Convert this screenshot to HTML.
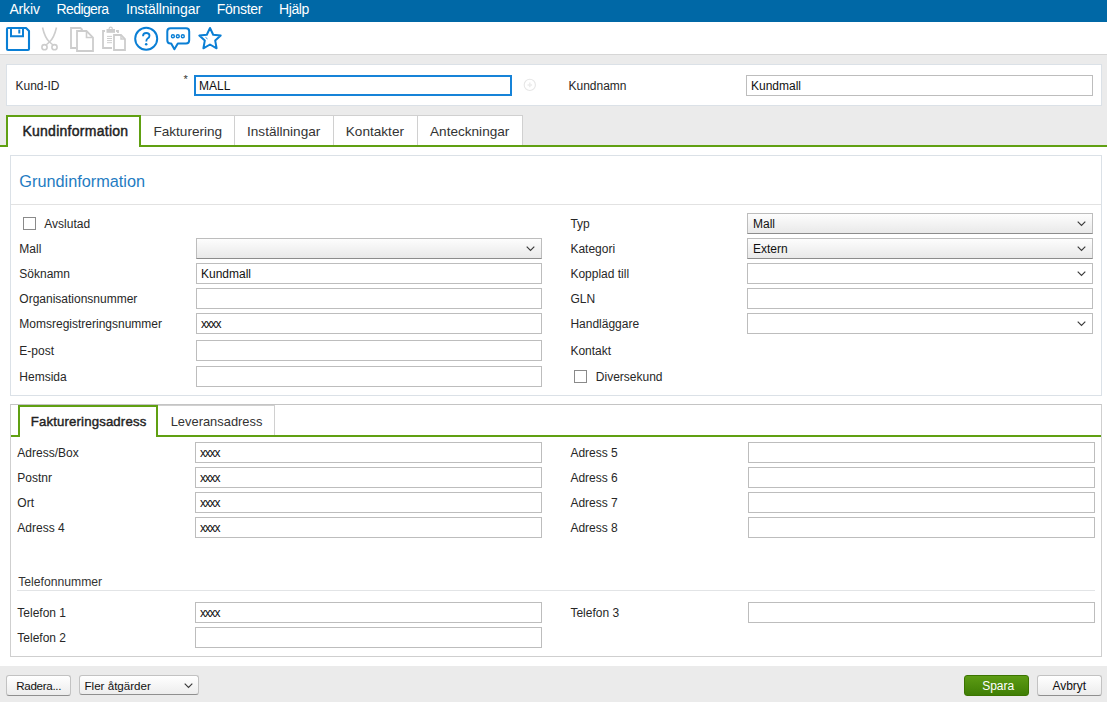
<!DOCTYPE html>
<html><head><meta charset="utf-8"><style>
html,body{margin:0;padding:0;}
body{width:1107px;height:702px;position:relative;overflow:hidden;background:#fff;font-family:"Liberation Sans", sans-serif;}
.t{position:absolute;white-space:nowrap;}
.b{position:absolute;}
svg.b{overflow:visible;}
svg{display:block;}
</style></head><body>
<div class="b" style="left:0px;top:0px;width:1107px;height:22px;background:#0068a6;"></div>
<div class="t" style="left:9.4px;top:2px;font-size:14px;line-height:14px;color:#fff;font-weight:normal;letter-spacing:-0.15px;">Arkiv</div>
<div class="t" style="left:56.5px;top:2px;font-size:14px;line-height:14px;color:#fff;font-weight:normal;letter-spacing:-0.6px;">Redigera</div>
<div class="t" style="left:125.9px;top:2px;font-size:14px;line-height:14px;color:#fff;font-weight:normal;letter-spacing:-0.11px;">Inställningar</div>
<div class="t" style="left:216.8px;top:2px;font-size:14px;line-height:14px;color:#fff;font-weight:normal;letter-spacing:-0.3px;">Fönster</div>
<div class="t" style="left:279px;top:2px;font-size:14px;line-height:14px;color:#fff;font-weight:normal;letter-spacing:-0.4px;">Hjälp</div>
<div class="b" style="left:0px;top:22px;width:1107px;height:32px;background:#fff;"></div>
<div class="b" style="left:0px;top:54px;width:1107px;height:1px;background:#d6d6d6;"></div>

<svg class="b" style="left:0;top:22px" width="240" height="32" viewBox="0 22 240 32">
 <!-- save -->
 <path d="M7 29 Q7 28 8 28 L26 28 L29 31 L29 49 Q29 50 28 50 L8 50 Q7 50 7 49 Z" fill="none" stroke="#0a7fd5" stroke-width="2.1" stroke-linejoin="round"/>
 <path d="M11 28 L11 36.2 L23 36.2 L23 28" fill="none" stroke="#0a7fd5" stroke-width="2"/>
 <rect x="18.3" y="29.5" width="2" height="4" fill="#0a7fd5"/>
 <!-- scissors -->
 <path d="M42.5 27.5 Q45 38 49.5 42 M56.5 27.5 Q54 38 49.5 42" fill="none" stroke="#cdcdcd" stroke-width="1.6"/>
 <ellipse cx="44.5" cy="47.2" rx="2.6" ry="2.6" fill="none" stroke="#cdcdcd" stroke-width="1.6"/>
 <ellipse cx="54.5" cy="47.2" rx="2.6" ry="2.6" fill="none" stroke="#cdcdcd" stroke-width="1.6"/>
 <path d="M46 45 L49.5 42 L53 45" fill="none" stroke="#cdcdcd" stroke-width="1.5"/>
 <!-- copy -->
 <path d="M76 48 L71 48 L71 28 L80.5 28 L82.5 30" fill="none" stroke="#cdcdcd" stroke-width="1.8"/>
 <path d="M77 31 L86.5 31 L93 37.5 L93 51 L77 51 Z" fill="none" stroke="#cdcdcd" stroke-width="1.8"/>
 <path d="M86.5 31 L86.5 37.5 L93 37.5" fill="none" stroke="#cdcdcd" stroke-width="1.6"/>
 <!-- paste -->
 <path d="M105 31 L103 31 L103 48 L112 48" fill="none" stroke="#cdcdcd" stroke-width="1.8"/>
 <path d="M116 31 L118 31 L118 33" fill="none" stroke="#cdcdcd" stroke-width="1.8"/>
 <rect x="106.5" y="29" width="8.5" height="3.8" fill="#cdcdcd"/>
 <circle cx="110.7" cy="28.8" r="1.6" fill="none" stroke="#cdcdcd" stroke-width="1.2"/>
 <path d="M107 36.4 H112 M107 38.5 H112 M107 40.6 H112 M107 42.7 H112" stroke="#cdcdcd" stroke-width="1"/>
 <path d="M114 35 L121 35 L125 39 L125 50 L114 50 Z" fill="none" stroke="#cdcdcd" stroke-width="1.8"/>
 <path d="M121 35 L121 39 L125 39" fill="none" stroke="#cdcdcd" stroke-width="1.4"/>
 <!-- help -->
 <circle cx="146.2" cy="38.7" r="11" fill="none" stroke="#0a7fd5" stroke-width="2"/>
 <path d="M143 36.2 Q143 33 146.3 33 Q149.5 33 149.5 35.8 Q149.5 37.6 147.6 38.5 Q146.3 39.2 146.3 41.4" fill="none" stroke="#0a7fd5" stroke-width="1.8"/>
 <circle cx="146.2" cy="44.2" r="1.25" fill="#0a7fd5"/>
 <!-- comment -->
 <path d="M170.5 28.2 L186 28.2 Q189.2 28.2 189.2 31.4 L189.2 40.2 Q189.2 43.4 186 43.4 L177.8 43.4 L174.4 49.2 L171.2 43.4 L170.5 43.4 Q167.3 43.4 167.3 40.2 L167.3 31.4 Q167.3 28.2 170.5 28.2 Z" fill="none" stroke="#0a7fd5" stroke-width="2" stroke-linejoin="round"/>
 <circle cx="172.9" cy="36.2" r="1.5" fill="none" stroke="#0a7fd5" stroke-width="1.35"/>
 <circle cx="177.8" cy="36.2" r="1.5" fill="none" stroke="#0a7fd5" stroke-width="1.35"/>
 <circle cx="182.8" cy="36.2" r="1.5" fill="none" stroke="#0a7fd5" stroke-width="1.35"/>
 <!-- star -->
 <path d="M210 28 L213.2 34.8 L220.7 35.6 L215.2 40.6 L216.6 48.3 L210 44.5 L203.4 48.3 L204.8 40.6 L199.3 35.6 L206.8 34.8 Z" fill="none" stroke="#0a7fd5" stroke-width="2" stroke-linejoin="round"/>
 <path d="M205.5 37.3 L207.5 38.9" stroke="#0a7fd5" stroke-width="0.9"/>
</svg>
<div class="b" style="left:0px;top:55px;width:1107px;height:92px;background:#ebebeb;"></div>
<div class="b" style="left:6px;top:64px;width:1096px;height:42px;background:#fff;border:1px solid #dbe1e7;box-sizing:border-box;"></div>
<div class="t" style="left:15.5px;top:80px;font-size:12px;line-height:12px;color:#272727;font-weight:normal;">Kund-ID</div>
<div class="t" style="left:183.5px;top:74px;font-size:11px;line-height:11px;color:#333;font-weight:normal;">*</div>
<div class="b" style="left:194px;top:75px;width:318px;height:21px;border:2px solid #1683d8;background:#fff;box-sizing:border-box;"></div>
<div class="t" style="left:199px;top:80px;font-size:12px;line-height:12px;color:#111;font-weight:normal;">MALL</div>
<svg class="b" style="left:522px;top:78px" width="16" height="16" viewBox="0 0 16 16"><circle cx="7.8" cy="6.9" r="5.6" fill="none" stroke="#e6e6e6" stroke-width="1.1"/><path d="M7.8 4.6V9.2M5.5 6.9H10.1" stroke="#ececec" stroke-width="1.5"/></svg>
<div class="t" style="left:568.5px;top:80px;font-size:12px;line-height:12px;color:#272727;font-weight:normal;">Kundnamn</div>
<div class="b" style="left:746px;top:75px;width:347px;height:21px;border:1px solid #bdbdbd;background:#fff;box-sizing:border-box;"></div>
<div class="t" style="left:751px;top:80px;font-size:12px;line-height:12px;color:#111;font-weight:normal;">Kundmall</div>
<div class="b" style="left:0px;top:145px;width:1107px;height:2px;background:#60a012;"></div>
<div class="b" style="left:140px;top:115px;width:95px;height:30px;background:#fff;border:1px solid #d0d0d0;border-bottom:none;box-sizing:border-box;"></div>
<div class="b" style="left:234px;top:115px;width:100px;height:30px;background:#fff;border:1px solid #d0d0d0;border-bottom:none;box-sizing:border-box;"></div>
<div class="b" style="left:333px;top:115px;width:85px;height:30px;background:#fff;border:1px solid #d0d0d0;border-bottom:none;box-sizing:border-box;"></div>
<div class="b" style="left:417px;top:115px;width:106px;height:30px;background:#fff;border:1px solid #d0d0d0;border-bottom:none;box-sizing:border-box;"></div>
<div class="t" style="left:153.4px;top:125px;font-size:13.6px;line-height:13.6px;color:#333;font-weight:normal;">Fakturering</div>
<div class="t" style="left:247px;top:125px;font-size:13.6px;line-height:13.6px;color:#333;font-weight:normal;">Inställningar</div>
<div class="t" style="left:345.8px;top:125px;font-size:13.6px;line-height:13.6px;color:#333;font-weight:normal;">Kontakter</div>
<div class="t" style="left:430px;top:125px;font-size:13.6px;line-height:13.6px;color:#333;font-weight:normal;">Anteckningar</div>
<div class="b" style="left:6px;top:115px;width:135px;height:32px;background:#fff;border:2px solid #60a012;border-bottom:none;box-sizing:border-box;"></div>
<div class="t" style="left:22.4px;top:124px;font-size:14px;line-height:14px;color:#222;font-weight:normal;-webkit-text-stroke:0.45px #222;letter-spacing:0.27px;">Kundinformation</div>
<div class="b" style="left:0px;top:147px;width:1107px;height:519px;background:#fff;"></div>
<div class="b" style="left:10px;top:155px;width:1092px;height:241px;border:1px solid #dbe1e7;box-sizing:border-box;"></div>
<div class="b" style="left:11px;top:204px;width:1090px;height:1px;background:#e2e2e2;"></div>
<div class="t" style="left:19.3px;top:173px;font-size:16.3px;line-height:16.3px;color:#1f7cc2;font-weight:normal;">Grundinformation</div>
<div class="b" style="left:23px;top:217px;width:13px;height:13px;border:1px solid #8a8a8a;background:#fff;box-sizing:border-box;"></div>
<div class="t" style="left:44.3px;top:218px;font-size:12px;line-height:12px;color:#272727;font-weight:normal;">Avslutad</div>
<div class="t" style="left:19.3px;top:243px;font-size:12px;line-height:12px;color:#272727;font-weight:normal;">Mall</div>
<div class="t" style="left:19.3px;top:268px;font-size:12px;line-height:12px;color:#272727;font-weight:normal;">Söknamn</div>
<div class="t" style="left:19.3px;top:293px;font-size:12px;line-height:12px;color:#272727;font-weight:normal;">Organisationsnummer</div>
<div class="t" style="left:19.3px;top:318px;font-size:12px;line-height:12px;color:#272727;font-weight:normal;">Momsregistreringsnummer</div>
<div class="t" style="left:19.3px;top:345px;font-size:12px;line-height:12px;color:#272727;font-weight:normal;">E-post</div>
<div class="t" style="left:19.3px;top:371px;font-size:12px;line-height:12px;color:#272727;font-weight:normal;">Hemsida</div>
<div class="b" style="left:196px;top:238px;width:346px;height:21px;border:1px solid #bdbdbd;border-bottom-color:#8c8c8c;background:linear-gradient(#fdfdfd,#e9e9e9);box-sizing:border-box;"></div>
<div class="b" style="left:525.5px;top:245.5px;width:9px;height:6px;"><svg width="9" height="6" viewBox="0 0 9 6"><path d="M0.7 0.7 L4.5 4.5 L8.3 0.7" fill="none" stroke="#3a3a3a" stroke-width="1.15"/></svg></div>
<div class="b" style="left:196px;top:263px;width:346px;height:21px;border:1px solid #bdbdbd;background:#fff;box-sizing:border-box;"></div>
<div class="t" style="left:201px;top:268px;font-size:12px;line-height:12px;color:#111;font-weight:normal;">Kundmall</div>
<div class="b" style="left:196px;top:288px;width:346px;height:21px;border:1px solid #bdbdbd;background:#fff;box-sizing:border-box;"></div>
<div class="b" style="left:196px;top:313px;width:346px;height:21px;border:1px solid #bdbdbd;background:#fff;box-sizing:border-box;"></div>
<div class="t" style="left:201px;top:318px;font-size:12px;line-height:12px;color:#111;font-weight:normal;letter-spacing:-1.2px;">xxxx</div>
<div class="b" style="left:196px;top:340px;width:346px;height:21px;border:1px solid #bdbdbd;background:#fff;box-sizing:border-box;"></div>
<div class="b" style="left:196px;top:366px;width:346px;height:21px;border:1px solid #bdbdbd;background:#fff;box-sizing:border-box;"></div>
<div class="t" style="left:570.4px;top:218px;font-size:12px;line-height:12px;color:#272727;font-weight:normal;">Typ</div>
<div class="t" style="left:570.4px;top:243px;font-size:12px;line-height:12px;color:#272727;font-weight:normal;">Kategori</div>
<div class="t" style="left:570.4px;top:268px;font-size:12px;line-height:12px;color:#272727;font-weight:normal;">Kopplad till</div>
<div class="t" style="left:570.4px;top:293px;font-size:12px;line-height:12px;color:#272727;font-weight:normal;">GLN</div>
<div class="t" style="left:570.4px;top:318px;font-size:12px;line-height:12px;color:#272727;font-weight:normal;">Handläggare</div>
<div class="t" style="left:570.4px;top:345px;font-size:12px;line-height:12px;color:#272727;font-weight:normal;">Kontakt</div>
<div class="b" style="left:747px;top:213px;width:346px;height:21px;border:1px solid #bdbdbd;border-bottom-color:#8c8c8c;background:linear-gradient(#fdfdfd,#e9e9e9);box-sizing:border-box;"></div>
<div class="t" style="left:753px;top:218px;font-size:12px;line-height:12px;color:#111;font-weight:normal;">Mall</div>
<div class="b" style="left:1076.5px;top:220.5px;width:9px;height:6px;"><svg width="9" height="6" viewBox="0 0 9 6"><path d="M0.7 0.7 L4.5 4.5 L8.3 0.7" fill="none" stroke="#3a3a3a" stroke-width="1.15"/></svg></div>
<div class="b" style="left:747px;top:238px;width:346px;height:21px;border:1px solid #bdbdbd;border-bottom-color:#8c8c8c;background:linear-gradient(#fdfdfd,#e9e9e9);box-sizing:border-box;"></div>
<div class="t" style="left:753px;top:243px;font-size:12px;line-height:12px;color:#111;font-weight:normal;">Extern</div>
<div class="b" style="left:1076.5px;top:245.5px;width:9px;height:6px;"><svg width="9" height="6" viewBox="0 0 9 6"><path d="M0.7 0.7 L4.5 4.5 L8.3 0.7" fill="none" stroke="#3a3a3a" stroke-width="1.15"/></svg></div>
<div class="b" style="left:747px;top:263px;width:346px;height:21px;border:1px solid #bdbdbd;border-bottom-color:#bdbdbd;background:#fff;box-sizing:border-box;"></div>
<div class="b" style="left:1076.5px;top:270.5px;width:9px;height:6px;"><svg width="9" height="6" viewBox="0 0 9 6"><path d="M0.7 0.7 L4.5 4.5 L8.3 0.7" fill="none" stroke="#3a3a3a" stroke-width="1.15"/></svg></div>
<div class="b" style="left:747px;top:288px;width:346px;height:21px;border:1px solid #bdbdbd;background:#fff;box-sizing:border-box;"></div>
<div class="b" style="left:747px;top:313px;width:346px;height:21px;border:1px solid #bdbdbd;border-bottom-color:#bdbdbd;background:#fff;box-sizing:border-box;"></div>
<div class="b" style="left:1076.5px;top:320.5px;width:9px;height:6px;"><svg width="9" height="6" viewBox="0 0 9 6"><path d="M0.7 0.7 L4.5 4.5 L8.3 0.7" fill="none" stroke="#3a3a3a" stroke-width="1.15"/></svg></div>
<div class="b" style="left:574px;top:370px;width:13px;height:13px;border:1px solid #8a8a8a;background:#fff;box-sizing:border-box;"></div>
<div class="t" style="left:595.8px;top:371px;font-size:12px;line-height:12px;color:#272727;font-weight:normal;">Diversekund</div>
<div class="b" style="left:10px;top:404px;width:1092px;height:253px;border:1px solid #cfcfcf;border-top-color:#c4c4c4;box-sizing:border-box;"></div>
<div class="b" style="left:11px;top:435px;width:1090px;height:2px;background:#60a012;"></div>
<div class="b" style="left:157px;top:405px;width:118px;height:30px;background:#fff;border:1px solid #d0d0d0;border-bottom:none;box-sizing:border-box;"></div>
<div class="t" style="left:170.7px;top:416px;font-size:12.9px;line-height:12.9px;color:#333;font-weight:normal;">Leveransadress</div>
<div class="b" style="left:18px;top:405px;width:140px;height:32px;background:#fff;border:2px solid #60a012;border-bottom:none;box-sizing:border-box;"></div>
<div class="t" style="left:30.8px;top:415px;font-size:13.2px;line-height:13.2px;color:#222;font-weight:normal;-webkit-text-stroke:0.4px #222;letter-spacing:0.15px;">Faktureringsadress</div>
<div class="t" style="left:17.3px;top:447px;font-size:12px;line-height:12px;color:#272727;font-weight:normal;">Adress/Box</div>
<div class="b" style="left:195px;top:442px;width:347px;height:21px;border:1px solid #bdbdbd;background:#fff;box-sizing:border-box;"></div>
<div class="t" style="left:200px;top:447px;font-size:12px;line-height:12px;color:#111;font-weight:normal;letter-spacing:-1.2px;">xxxx</div>
<div class="t" style="left:17.3px;top:472px;font-size:12px;line-height:12px;color:#272727;font-weight:normal;">Postnr</div>
<div class="b" style="left:195px;top:467px;width:347px;height:21px;border:1px solid #bdbdbd;background:#fff;box-sizing:border-box;"></div>
<div class="t" style="left:200px;top:472px;font-size:12px;line-height:12px;color:#111;font-weight:normal;letter-spacing:-1.2px;">xxxx</div>
<div class="t" style="left:17.3px;top:497px;font-size:12px;line-height:12px;color:#272727;font-weight:normal;">Ort</div>
<div class="b" style="left:195px;top:492px;width:347px;height:21px;border:1px solid #bdbdbd;background:#fff;box-sizing:border-box;"></div>
<div class="t" style="left:200px;top:497px;font-size:12px;line-height:12px;color:#111;font-weight:normal;letter-spacing:-1.2px;">xxxx</div>
<div class="t" style="left:17.3px;top:522px;font-size:12px;line-height:12px;color:#272727;font-weight:normal;">Adress 4</div>
<div class="b" style="left:195px;top:517px;width:347px;height:21px;border:1px solid #bdbdbd;background:#fff;box-sizing:border-box;"></div>
<div class="t" style="left:200px;top:522px;font-size:12px;line-height:12px;color:#111;font-weight:normal;letter-spacing:-1.2px;">xxxx</div>
<div class="t" style="left:570.4px;top:447px;font-size:12px;line-height:12px;color:#272727;font-weight:normal;">Adress 5</div>
<div class="b" style="left:748px;top:442px;width:347px;height:21px;border:1px solid #bdbdbd;background:#fff;box-sizing:border-box;"></div>
<div class="t" style="left:570.4px;top:472px;font-size:12px;line-height:12px;color:#272727;font-weight:normal;">Adress 6</div>
<div class="b" style="left:748px;top:467px;width:347px;height:21px;border:1px solid #bdbdbd;background:#fff;box-sizing:border-box;"></div>
<div class="t" style="left:570.4px;top:497px;font-size:12px;line-height:12px;color:#272727;font-weight:normal;">Adress 7</div>
<div class="b" style="left:748px;top:492px;width:347px;height:21px;border:1px solid #bdbdbd;background:#fff;box-sizing:border-box;"></div>
<div class="t" style="left:570.4px;top:522px;font-size:12px;line-height:12px;color:#272727;font-weight:normal;">Adress 8</div>
<div class="b" style="left:748px;top:517px;width:347px;height:21px;border:1px solid #bdbdbd;background:#fff;box-sizing:border-box;"></div>
<div class="t" style="left:18.2px;top:576px;font-size:12.2px;line-height:12.2px;color:#333;font-weight:normal;">Telefonnummer</div>
<div class="b" style="left:17px;top:590px;width:1078px;height:1px;background:#e2e4e6;"></div>
<div class="t" style="left:17.3px;top:607px;font-size:12px;line-height:12px;color:#272727;font-weight:normal;">Telefon 1</div>
<div class="t" style="left:17.3px;top:632px;font-size:12px;line-height:12px;color:#272727;font-weight:normal;">Telefon 2</div>
<div class="b" style="left:195px;top:602px;width:347px;height:21px;border:1px solid #bdbdbd;background:#fff;box-sizing:border-box;"></div>
<div class="t" style="left:200px;top:607px;font-size:12px;line-height:12px;color:#111;font-weight:normal;letter-spacing:-1.2px;">xxxx</div>
<div class="b" style="left:195px;top:627px;width:347px;height:21px;border:1px solid #bdbdbd;background:#fff;box-sizing:border-box;"></div>
<div class="t" style="left:570.4px;top:607px;font-size:12px;line-height:12px;color:#272727;font-weight:normal;">Telefon 3</div>
<div class="b" style="left:748px;top:602px;width:347px;height:21px;border:1px solid #bdbdbd;background:#fff;box-sizing:border-box;"></div>
<div class="b" style="left:0px;top:666px;width:1107px;height:36px;background:#ebebeb;"></div>
<div class="b" style="left:6px;top:675px;width:65px;height:21px;border:1px solid #c2c2c2;border-bottom-color:#8f8f8f;border-radius:3px;background:linear-gradient(#ffffff,#ececec);box-sizing:border-box;"></div>
<div class="t" style="left:16.2px;top:680px;font-size:11.6px;line-height:11.6px;color:#111;font-weight:normal;letter-spacing:-0.3px;">Radera...</div>
<div class="b" style="left:79px;top:675px;width:120px;height:20px;border:1px solid #c2c2c2;border-bottom-color:#8f8f8f;border-radius:3px;background:linear-gradient(#ffffff,#ededed);box-sizing:border-box;"></div>
<div class="t" style="left:84.5px;top:680px;font-size:11.6px;line-height:11.6px;color:#111;font-weight:normal;">Fler åtgärder</div>
<div class="b" style="left:183.5px;top:682.5px;width:9px;height:6px;"><svg width="9" height="6" viewBox="0 0 9 6"><path d="M0.7 0.7 L4.5 4.5 L8.3 0.7" fill="none" stroke="#3a3a3a" stroke-width="1.15"/></svg></div>
<div class="b" style="left:964px;top:675px;width:65px;height:21px;border:1px solid #3b7400;border-radius:3px;background:linear-gradient(#5d9c14,#3f7e05);box-sizing:border-box;"></div>
<div class="t" style="left:982.2px;top:680px;font-size:12px;line-height:12px;color:#fff;font-weight:normal;">Spara</div>
<div class="b" style="left:1037px;top:675px;width:65px;height:21px;border:1px solid #c2c2c2;border-bottom-color:#8f8f8f;border-radius:3px;background:linear-gradient(#ffffff,#ececec);box-sizing:border-box;"></div>
<div class="t" style="left:1052.4px;top:680px;font-size:12px;line-height:12px;color:#111;font-weight:normal;">Avbryt</div>
</body></html>
